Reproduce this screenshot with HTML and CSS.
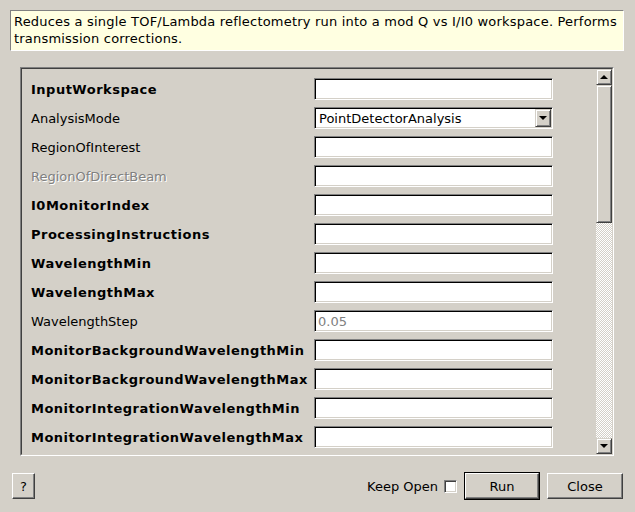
FILE: index.html
```html
<!DOCTYPE html>
<html>
<head>
<meta charset="utf-8">
<link rel="stylesheet" href="styles.css">
</head>
<body>
<div class="dialog">
  <div class="desc">Reduces a single TOF/Lambda reflectometry run into a mod Q vs I/I0 workspace. Performs transmission corrections.</div>
  <div class="frame">
    <div class="frame-inner">
      <div class="props">
        <div class="lbl bold">InputWorkspace</div><div class="field"></div>
        <div class="lbl">AnalysisMode</div>
        <div class="field combo"><span class="combo-text">PointDetectorAnalysis</span><span class="combo-btn"><span class="tri-down"></span></span></div>
        <div class="lbl">RegionOfInterest</div><div class="field"></div>
        <div class="lbl disabled">RegionOfDirectBeam</div><div class="field"></div>
        <div class="lbl bold">I0MonitorIndex</div><div class="field"></div>
        <div class="lbl bold">ProcessingInstructions</div><div class="field"></div>
        <div class="lbl bold">WavelengthMin</div><div class="field"></div>
        <div class="lbl bold">WavelengthMax</div><div class="field"></div>
        <div class="lbl">WavelengthStep</div><div class="field"><span class="placeholder">0.05</span></div>
        <div class="lbl bold">MonitorBackgroundWavelengthMin</div><div class="field"></div>
        <div class="lbl bold">MonitorBackgroundWavelengthMax</div><div class="field"></div>
        <div class="lbl bold">MonitorIntegrationWavelengthMin</div><div class="field"></div>
        <div class="lbl bold">MonitorIntegrationWavelengthMax</div><div class="field"></div>
      </div>
      <div class="vscroll">
        <div class="sb-btn"><span class="tri-up"></span></div>
        <div class="slider"></div>
        <div class="track"></div>
        <div class="sb-btn"><span class="tri-down"></span></div>
      </div>
    </div>
  </div>
  <div class="footer">
    <div class="btn help">?</div>
    <div class="spacer"></div>
    <span class="keep">Keep Open</span>
    <span class="check"></span>
    <div class="btn-default"><div class="btn run">Run</div></div>
    <div class="btn close">Close</div>
  </div>
</div>
</body>
</html>
```

FILE: styles.css
```css
* { box-sizing: border-box; }
html, body {
  margin: 0;
  padding: 0;
  width: 635px;
  height: 512px;
  overflow: hidden;
  background: #d4d0c8;
  font-family: "DejaVu Sans", sans-serif;
  font-size: 13px;
  color: #000;
}
.dialog {
  display: flex;
  flex-direction: column;
  padding: 10px 11px 0 10px;
  height: 512px;
}
.desc {
  height: 41px;
  background: #ffffe1;
  border: 1px solid;
  border-color: #808080 #ffffff #ffffff #808080;
  padding: 2px 0 0 3px;
  line-height: 17px;
  letter-spacing: 0.2px;
}
.frame {
  margin: 16px 10px 0 10px;
  height: 389px;
  border: 1px solid;
  border-color: #808080 #ffffff #ffffff #808080;
}
.frame-inner {
  height: 100%;
  border: 1px solid;
  border-color: #404040 #d4d0c8 #d4d0c8 #404040;
  display: flex;
  overflow: hidden;
}
.props {
  flex: 1;
  padding: 9px 0 0 9px;
  display: grid;
  grid-template-columns: 283px 239px;
  grid-auto-rows: 22px;
  row-gap: 7px;
  align-items: center;
  align-content: start;
  overflow: hidden;
}
.lbl { white-space: nowrap; }
.lbl.bold { font-weight: bold; letter-spacing: 0.5px; }
.lbl.disabled { color: #808080; text-shadow: 1px 1px 0 #ffffff; }
.field {
  height: 22px;
  background: #fff;
  border: 1px solid;
  border-color: #808080 #ffffff #ffffff #808080;
  box-shadow: inset 1px 1px 0 #000, inset -1px -1px 0 #d4d0c8;
  display: flex;
  align-items: center;
  padding-left: 3px;
  position: relative;
}
.placeholder { color: #808080; }
.combo { padding-left: 4px; }
.combo-text { flex: 1; }
.combo-btn {
  width: 16px;
  height: 18px;
  margin-right: 1px;
  background: #d4d0c8;
  border: 1px solid;
  border-color: #d4d0c8 #404040 #404040 #d4d0c8;
  box-shadow: inset 1px 1px 0 #fff, inset -1px -1px 0 #808080;
  display: flex;
  align-items: center;
  justify-content: center;
}
.tri-down {
  width: 0; height: 0;
  border-left: 4px solid transparent;
  border-right: 4px solid transparent;
  border-top: 4px solid #000;
}
.tri-up {
  width: 0; height: 0;
  border-left: 4px solid transparent;
  border-right: 4px solid transparent;
  border-bottom: 4px solid #000;
}
.vscroll {
  width: 16px;
  display: flex;
  flex-direction: column;
}
.sb-btn {
  height: 16px;
  flex: none;
  border: 1px solid;
  border-color: #d4d0c8 #404040 #404040 #d4d0c8;
  box-shadow: inset 1px 1px 0 #fff, inset -1px -1px 0 #808080;
  display: flex;
  align-items: center;
  justify-content: center;
}
.slider {
  height: 138px;
  flex: none;
  border: 1px solid;
  border-color: #d4d0c8 #404040 #404040 #d4d0c8;
  box-shadow: inset 1px 1px 0 #fff, inset -1px -1px 0 #808080;
}
.track {
  flex: 1;
  background: repeating-conic-gradient(#ffffff 0 25%, #d4d0c8 0 50%) 0 0 / 2px 2px;
}
.footer {
  margin-top: 16px;
  height: 28px;
  display: flex;
  align-items: center;
  padding: 0 1px 0 2px;
}
.spacer { flex: 1; }
.btn {
  border: 1px solid;
  border-color: #ffffff #404040 #404040 #ffffff;
  box-shadow: inset -1px -1px 0 #808080;
  display: flex;
  align-items: center;
  justify-content: center;
}
.help { width: 23px; height: 26px; }
.keep { margin-right: 6px; }
.check {
  width: 13px;
  height: 13px;
  background: #fff;
  border: 1px solid;
  border-color: #808080 #ffffff #ffffff #808080;
  box-shadow: inset 1px 1px 0 #404040, inset -1px -1px 0 #d4d0c8;
}
.btn-default {
  margin-left: 7px;
  width: 76px;
  height: 28px;
  border: 1px solid #000;
}
.run { width: 100%; height: 100%; }
.close { margin-left: 7px; width: 76px; height: 26px; }
```
